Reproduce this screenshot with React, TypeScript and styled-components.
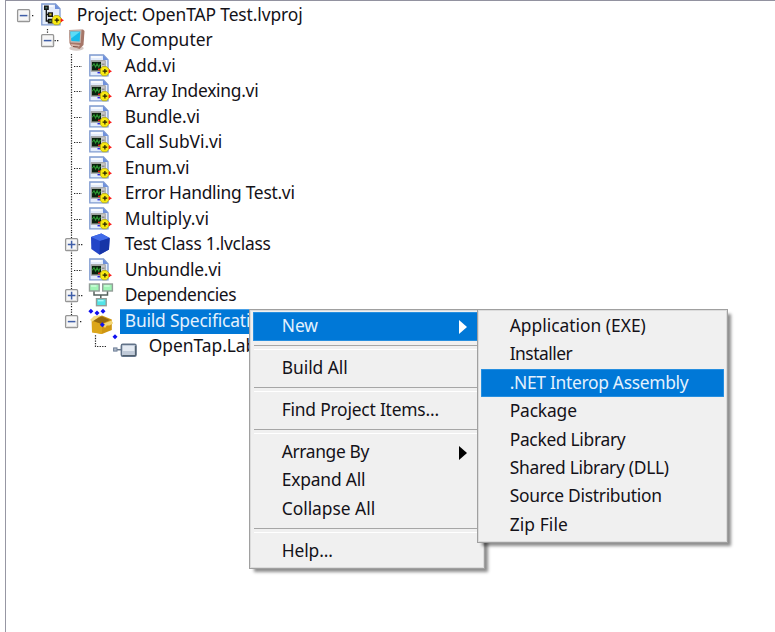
import React from "react";
import styled, { createGlobalStyle } from "styled-components";

const GlobalStyle = createGlobalStyle`
  * { box-sizing: border-box; }
  body { margin: 0; background: #fff; overflow: hidden; }
`;

const Window = styled.div`
  position: relative;
  width: 775px;
  height: 632px;
  padding-left: 5px;
  overflow: hidden;
  background: #fff;
  color: #141218;
  font: 17.4px/25.5px "Noto Sans", "Open Sans", sans-serif;
`;

const TreePane = styled.div`
  height: 632px;
  padding-top: 1.5px;
  border-left: 1.4px solid #9797a3;
  border-top: 1px solid #9292a0;
`;

const Row = styled.div<{ $level: number }>`
  display: flex;
  height: 25.5px;
  padding-left: ${(p) => 10.9 + p.$level * 24}px;
`;

const Glyph = styled.svg`
  flex: none;
  width: 24px;
  height: 25.5px;
  overflow: visible;
`;

const Label = styled.span<{ $selected?: boolean; $spacing: number }>`
  height: 25.5px;
  margin-left: 6.9px;
  padding: 0 5px;
  line-height: 22.4px;
  white-space: pre;
  letter-spacing: ${(p) => p.$spacing}px;
  color: ${(p) => (p.$selected ? "#e4f1fd" : "inherit")};
  background: ${(p) => (p.$selected ? "#0078d7" : "transparent")};
  box-shadow: ${(p) => (p.$selected ? "inset 0 1px #4ba2e8" : "none")};
`;

const Popup = styled.div<{ $left: number; $width: number }>`
  position: absolute;
  top: 309px;
  left: ${(p) => p.$left}px;
  width: ${(p) => p.$width}px;
  padding: 2.3px 3.1px 3px;
  background: #f0f0f0;
  border: 1px solid #a0a0a0;
  box-shadow: inset 0 0 0 1px #dcdcdc, 4px 4px 3px -1px rgba(0, 0, 0, 0.45);
`;

const Item = styled.div<{ $active?: boolean }>`
  display: flex;
  align-items: center;
  justify-content: space-between;
  height: 28.4px;
  padding: 0 14px 1.5px 28.6px;
  white-space: pre;
  color: ${(p) => (p.$active ? "#e4f1fd" : "inherit")};
  background: ${(p) => (p.$active ? "#0078d7" : "transparent")};
  box-shadow: ${(p) => (p.$active ? "inset 0 0 0 0.7px #3397e4" : "none")};
`;

const ItemText = styled.span<{ $spacing: number }>`
  letter-spacing: ${(p) => p.$spacing}px;
`;

const Separator = styled.div`
  height: 13.6px;
  padding: 4.6px 1px 0;
  &::before {
    content: "";
    display: block;
    height: 2.5px;
    border-top: 1.3px solid #a6a6a6;
    border-bottom: 1.2px solid #fff;
  }
`;

const Arrow = styled.svg<{ $active?: boolean }>`
  width: 8px;
  height: 14px;
  margin-top: 2px;
  fill: ${(p) => (p.$active ? "#fff" : "#000")};
`;

type Kind = "project" | "computer" | "vi" | "class" | "deps" | "build" | "assembly";
type Toggle = "plus" | "minus" | undefined;

function Guide({ level, toggle, last }: { level: number; toggle: Toggle; last?: boolean }) {
  const dots = { stroke: "#222", strokeWidth: 1.2, strokeDasharray: "1.3 1.25" };
  return (
    <Glyph viewBox="0 0 24 25.5">
      {level === 1 && <path d="M6.5 1V6" {...dots} />}
      {level === 2 && <path d={toggle === "minus" ? "M6.5 0V6" : "M6.5 0V25.5"} {...dots} />}
      {last && <path d="M6.5 1.3V12.5H18" fill="none" {...dots} />}
      {!last && !toggle && <path d="M9 12.5H17" {...dots} />}
      {toggle && (
        <>
          <path d={level === 0 || (toggle === "minus" && level === 2) ? "M15 12.6H17" : "M13.5 12.6H18"} {...dots} />
          <rect x="0.6" y="6.7" width="12" height="12" rx="1" fill="#f6f6f6" stroke="#969696" strokeWidth="1.3" />
          <path d="M2 17.5H11.6V12" fill="none" stroke="#dedede" />
          <path d={toggle === "plus" ? "M2.8 12.6H10.4M6.6 8.8V16.4" : "M2.8 12.6H10.4"} stroke="#3f5ea8" strokeWidth="1.5" />
        </>
      )}
    </Glyph>
  );
}

function Page() {
  return (
    <>
      <path d="M0.8 1H14.5L19 5.7V21.8H0.8Z" fill="#e3ecfb" stroke="#7f9ad0" strokeWidth="1.3" />
      <path d="M14 1V6H19Z" fill="#6f91dc" />
      <path d="M2 3H12.5" stroke="#fff" strokeWidth="1.5" />
    </>
  );
}

function YellowNode() {
  return (
    <>
      <path d="M13.5 12.6H17.4L20.4 15.3V19L17.4 21.8H13.5L11.3 19.5V15Z" fill="#f8ea12" stroke="#a89d10" strokeWidth="0.7" />
      <path d="M13.6 17.2H18.2M15.9 15V19.5" stroke="#221f00" strokeWidth="1.2" />
      <path d="M19.6 15.2L23 17.2L19.6 19.2Z" fill="#fa1a18" />
    </>
  );
}

function Dot({ x, y }: { x: number; y: number }) {
  return <path d={`M${x - 2.5} ${y}L${x} ${y - 2.5}L${x + 2.5} ${y}L${x} ${y + 2.5}Z`} fill="#1010ef" />;
}

function KindIcon({ kind }: { kind: Kind }) {
  return (
    <Glyph viewBox="0 0 24 25.5">
      {kind === "project" && (
        <>
          <Page />
          <path d="M5.3 4V18H9M5.3 11.5H9" fill="none" stroke="#111" strokeWidth="1.3" />
          <path d="M3 2.4H7.8V7H3ZM6.8 9.2H12V14H6.8ZM6.8 15.8H12V20.4H6.8Z" fill="#151515" />
          <path d="M4.4 3.8H6.3V5.6H4.4Z" fill="#4d796e" />
          <path d="M8.3 10.5H10.5V12.5H8.3Z" fill="#c7bb23" />
          <path d="M8.3 17.1H10.5V19H8.3Z" fill="#537b4d" />
          <YellowNode />
        </>
      )}
      {kind === "vi" && (
        <>
          <Page />
          <rect x="2.2" y="6.7" width="14" height="10.5" fill="#c8c8c8" stroke="#929292" strokeWidth="0.8" />
          <rect x="2.9" y="7.8" width="9.1" height="8.7" fill="#0b210d" />
          <path d="M3.2 12.3L5 9.8L6.6 13L8.1 9.8L9.7 13L11.4 10" fill="none" stroke="#2c9832" strokeWidth="1.1" />
          <path d="M12.8 10.2H15.5" stroke="#777" />
          <path d="M9 15.4H12.5" stroke="#f31818" strokeWidth="1.5" />
          <path d="M8.5 18.7H12" stroke="#2828ed" strokeWidth="1.4" />
          <YellowNode />
        </>
      )}
      {kind === "computer" && (
        <>
          <ellipse cx="11.5" cy="20.3" rx="7.2" ry="2.4" fill="#d6c9c4" />
          <path d="M4 2L18 1.4L19.5 3L18.5 17L14.5 21L6 18L4.5 15Z" fill="#a67769" />
          <path d="M4.1 2.2L16.5 2L15.7 15L5.5 14.4Z" fill="#c4b5af" />
          <path d="M5.2 3.5H15.3L14.7 13.5L6.4 13Z" fill="#16bbea" />
          <path d="M5.6 4H14.7L6.1 10.5Z" fill="#5cdcf7" />
          <path d="M6 16L15 17L13 20L7 19Z" fill="#d7b4a7" />
          <path d="M8 18.5L13.5 19" stroke="#795045" strokeWidth="1.2" />
        </>
      )}
      {kind === "class" && (
        <>
          <path d="M2 5L12.3 1.4L20.7 6L20 17.5L10.5 22.8L2.3 17Z" fill="#2445c7" />
          <path d="M2 5L12.3 1.4L20.7 6L11 9Z" fill="#416be9" />
          <path d="M11 9L20.7 6L20 17.5L10.5 22.8Z" fill="#1635a7" />
        </>
      )}
      {kind === "deps" && (
        <>
          <path d="M5 8V12H18.5V8M11.8 12V16" fill="none" stroke="#55615d" strokeWidth="1.5" />
          {[[0.5, 1], [13.7, 1], [7.5, 15.7]].map(([x, y], i) => (
            <g key={x}>
              <rect x={x} y={y} width="9.7" height="7" fill={i === 2 ? "#52e4e8" : "#9ff5b5"} stroke="#929d98" strokeWidth="1.4" />
              <path d={`M${x + 1.5} ${y + 2}H${x + 7}`} stroke={i === 2 ? "#a8fcfc" : "#d6ffe0"} strokeWidth="1.3" />
            </g>
          ))}
        </>
      )}
      {kind === "build" && (
        <>
          <path d="M2.6 10L13 6.5L22.8 10.5V21L13 25L3 23Z" fill="#cf9612" />
          <path d="M3 12L13 15V25L3 23.4Z" fill="#dca61a" />
          <path d="M3 11.5L13 7.5L21 11L12.5 15Z" fill="#94690f" />
          <path d="M1 11L5 7L11.5 6.2L8.5 9L3.5 12.5Z" fill="#f6df83" />
          <path d="M12.8 15.3L22.5 11.5L24.2 14.2L20.5 16.5L17.8 16.6L16 19Z" fill="#f3d675" />
          <Dot x={1.9} y={2.2} />
          <Dot x={8} y={4} />
          <Dot x={14} y={2.2} />
          <Dot x={13.3} y={15.8} />
          <Dot x={26} y={27.8} />
        </>
      )}
      {kind === "assembly" && (
        <>
          <path d="M3 15.7H9" stroke="#68788c" strokeWidth="1.5" />
          <rect x="0.6" y="13.9" width="3.4" height="3.2" fill="#aeb9c8" stroke="#71819a" />
          <rect x="8.3" y="10.3" width="14.8" height="12" rx="1.5" fill="#c0cad8" stroke="#627389" strokeWidth="1.4" />
          <path d="M10 12H21.3V17H10Z" fill="#e4eaf2" />
          <path d="M9.5 21.5H22.5V12" fill="none" stroke="#52616f" strokeWidth="1.2" />
        </>
      )}
    </Glyph>
  );
}

interface Node {
  text: string;
  level: number;
  kind: Kind;
  spacing: number;
  toggle?: Toggle;
  selected?: boolean;
}

const nodes: Node[] = [
  { text: "Project: OpenTAP Test.lvproj", level: 0, kind: "project", toggle: "minus", spacing: -0.11 },
  { text: "My Computer", level: 1, kind: "computer", toggle: "minus", spacing: 0.03 },
  { text: "Add.vi", level: 2, kind: "vi", spacing: 0.1 },
  { text: "Array Indexing.vi", level: 2, kind: "vi", spacing: -0.27 },
  { text: "Bundle.vi", level: 2, kind: "vi", spacing: -0.08 },
  { text: "Call SubVi.vi", level: 2, kind: "vi", spacing: -0.05 },
  { text: "Enum.vi", level: 2, kind: "vi", spacing: -0.1 },
  { text: "Error Handling Test.vi", level: 2, kind: "vi", spacing: -0.27 },
  { text: "Multiply.vi", level: 2, kind: "vi", spacing: 0.1 },
  { text: "Test Class 1.lvclass", level: 2, kind: "class", toggle: "plus", spacing: -0.26 },
  { text: "Unbundle.vi", level: 2, kind: "vi", spacing: -0.2 },
  { text: "Dependencies", level: 2, kind: "deps", toggle: "plus", spacing: -0.38 },
  { text: "Build Specifications", level: 2, kind: "build", toggle: "minus", selected: true, spacing: -0.18 },
  { text: "OpenTap.LabVIEW", level: 3, kind: "assembly", spacing: -0.03 },
];

interface Entry {
  text: string;
  spacing: number;
  active?: boolean;
  arrow?: boolean;
}

const contextMenu: (Entry | null)[] = [
  { text: "New", active: true, arrow: true, spacing: 0 },
  null,
  { text: "Build All", spacing: -0.03 },
  null,
  { text: "Find Project Items...", spacing: -0.2 },
  null,
  { text: "Arrange By", arrow: true, spacing: -0.35 },
  { text: "Expand All", spacing: -0.17 },
  { text: "Collapse All", spacing: -0.02 },
  null,
  { text: "Help...", spacing: -0.1 },
];

const newMenu: Entry[] = [
  { text: "Application (EXE)", spacing: 0 },
  { text: "Installer", spacing: -0.5 },
  { text: ".NET Interop Assembly", active: true, spacing: -0.3 },
  { text: "Package", spacing: -0.15 },
  { text: "Packed Library", spacing: -0.3 },
  { text: "Shared Library (DLL)", spacing: -0.28 },
  { text: "Source Distribution", spacing: -0.28 },
  { text: "Zip File", spacing: 0.1 },
];

function Menu({ left, width, entries }: { left: number; width: number; entries: (Entry | null)[] }) {
  return (
    <Popup $left={left} $width={width}>
      {entries.map((e, i) =>
        e ? (
          <Item key={i} $active={e.active}>
            <ItemText $spacing={e.spacing}>{e.text}</ItemText>
            {e.arrow && (
              <Arrow $active={e.active} viewBox="0 0 8 14">
                <path d="M0 0L8 7L0 14Z" />
              </Arrow>
            )}
          </Item>
        ) : (
          <Separator key={i} />
        )
      )}
    </Popup>
  );
}

export default function App() {
  return (
    <Window>
      <GlobalStyle />
      <TreePane>
        {nodes.map((n) => (
          <Row key={n.text} $level={n.level}>
            <Guide level={n.level} toggle={n.toggle} last={n.level === 3} />
            <KindIcon kind={n.kind} />
            <Label $selected={n.selected} $spacing={n.spacing}>{n.text}</Label>
          </Row>
        ))}
      </TreePane>
      <Menu left={249} width={236} entries={contextMenu} />
      <Menu left={477} width={251} entries={newMenu} />
    </Window>
  );
}
